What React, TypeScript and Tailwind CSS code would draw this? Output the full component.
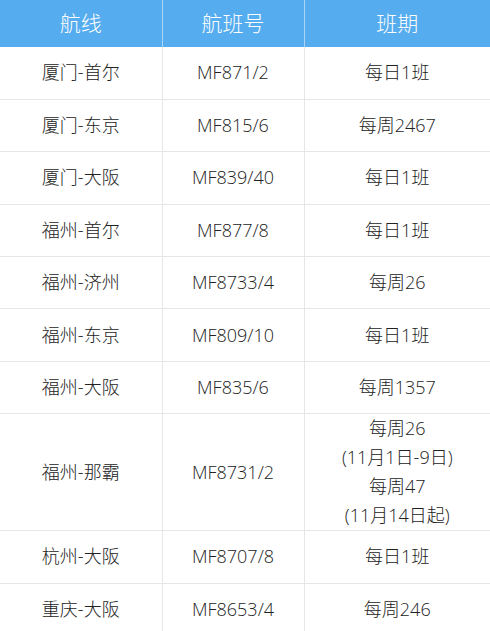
const rows: { route: string; flight: string; schedule: string[] }[] = [
  { route: "厦门-首尔", flight: "MF871/2", schedule: ["每日1班"] },
  { route: "厦门-东京", flight: "MF815/6", schedule: ["每周2467"] },
  { route: "厦门-大阪", flight: "MF839/40", schedule: ["每日1班"] },
  { route: "福州-首尔", flight: "MF877/8", schedule: ["每日1班"] },
  { route: "福州-济州", flight: "MF8733/4", schedule: ["每周26"] },
  { route: "福州-东京", flight: "MF809/10", schedule: ["每日1班"] },
  { route: "福州-大阪", flight: "MF835/6", schedule: ["每周1357"] },
  {
    route: "福州-那霸",
    flight: "MF8731/2",
    schedule: ["每周26", "(11月1日-9日)", "每周47", "(11月14日起)"],
  },
  { route: "杭州-大阪", flight: "MF8707/8", schedule: ["每日1班"] },
  { route: "重庆-大阪", flight: "MF8653/4", schedule: ["每周246"] },
];

export default function App() {
  return (
    <div
      className="w-[490px] h-[631px] overflow-hidden bg-white"
      style={{ fontFamily: '"Open Sans", "Noto Sans CJK SC", sans-serif' }}
    >
      <table className="w-full table-fixed border-collapse text-center">
        <colgroup>
          <col className="w-[162px]" />
          <col className="w-[142px]" />
          <col />
        </colgroup>
        <thead>
          <tr className="bg-[#55acee] text-white text-[21px] font-light h-[47px]">
            <th className="font-light border-r border-[#a9d4f5]">航线</th>
            <th className="font-light border-r border-[#a9d4f5]">航班号</th>
            <th className="font-light">班期</th>
          </tr>
        </thead>
        <tbody className="text-[18px] font-light text-[#222] leading-[29px]">
          {rows.map((r) => (
            <tr key={r.route} className="h-[52.4px] border-b border-[#e6e6e6]">
              <td className="border-r border-[#e6e6e6]">{r.route}</td>
              <td className="border-r border-[#e6e6e6]">{r.flight}</td>
              <td>
                {r.schedule.map((s) => (
                  <div key={s}>{s}</div>
                ))}
              </td>
            </tr>
          ))}
        </tbody>
      </table>
    </div>
  );
}
